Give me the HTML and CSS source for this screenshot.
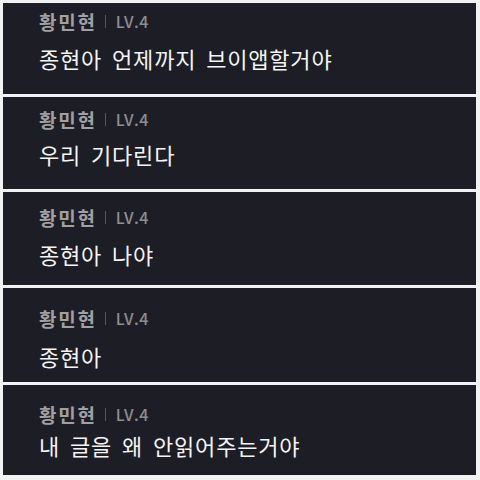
FILE: index.html
```html
<!DOCTYPE html>
<html lang="ko">
<head>
  <meta charset="UTF-8" />
  <meta name="viewport" content="width=device-width, initial-scale=1.0"/>
  <title>댓글</title>
  <link rel="stylesheet" href="styles.css">
</head>
<body>
  <div class="comments">
    <div class="comment comment-1">
      <div class="meta">
        <span class="name">황민현</span>
        <span class="sep"></span>
        <span class="level">LV.4</span>
      </div>
      <p class="text">종현아 언제까지 브이앱할거야</p>
    </div>
    <div class="comment comment-2">
      <div class="meta">
        <span class="name">황민현</span>
        <span class="sep"></span>
        <span class="level">LV.4</span>
      </div>
      <p class="text">우리 기다린다</p>
    </div>
    <div class="comment comment-3">
      <div class="meta">
        <span class="name">황민현</span>
        <span class="sep"></span>
        <span class="level">LV.4</span>
      </div>
      <p class="text">종현아 나야</p>
    </div>
    <div class="comment comment-4">
      <div class="meta">
        <span class="name">황민현</span>
        <span class="sep"></span>
        <span class="level">LV.4</span>
      </div>
      <p class="text">종현아</p>
    </div>
    <div class="comment comment-5">
      <div class="meta">
        <span class="name">황민현</span>
        <span class="sep"></span>
        <span class="level">LV.4</span>
      </div>
      <p class="text">내 글을 왜 안읽어주는거야</p>
    </div>
  </div>
</body>
</html>
```

FILE: styles.css
```css
:root {
  --card-color: #1d1e25;
  --gap-color: #f2f2f2;
  --name-color: #a0a0a2;
  --level-color: #8e8e91;
  --text-color: #f4f4f4;
}

html, body {
  margin: 0;
  padding: 0;
  background-color: var(--gap-color);
}

body {
  font-family: "Noto Sans CJK KR", "Noto Sans", sans-serif;
}

.comments {
  display: flex;
  flex-direction: column;
  gap: 3px;
  padding: 3px 4px 3px 3px;
}

.comment {
  background-color: var(--card-color);
  padding-left: 36px;
  box-sizing: border-box;
}

.meta {
  display: flex;
  align-items: center;
  height: 24px;
}

.name {
  font-size: 19px;
  font-weight: 700;
  letter-spacing: 1.8px;
  color: var(--name-color);
}

.sep {
  width: 1px;
  height: 13px;
  margin: 0 10px 0 8px;
  background-color: #55565b;
}

.level {
  font-size: 16px;
  font-weight: 500;
  letter-spacing: 0.5px;
  color: var(--level-color);
}

.text {
  margin: 0;
  font-size: 22px;
  line-height: 28px;
  letter-spacing: 0.8px;
  word-spacing: 3px;
  color: var(--text-color);
}

.comment-1 { height: 91px; padding-top: 6px; }
.comment-1 .text { margin-top: 11px; }

.comment-2 { height: 92px; padding-top: 10px; }
.comment-2 .text { margin-top: 9px; }

.comment-3 { height: 93px; padding-top: 13px; }
.comment-3 .text { margin-top: 11px; }

.comment-4 { height: 94px; padding-top: 18px; }
.comment-4 .text { margin-top: 12px; }

.comment-5 { height: 90px; padding-top: 17px; }
.comment-5 .text { margin-top: 5px; }
```
